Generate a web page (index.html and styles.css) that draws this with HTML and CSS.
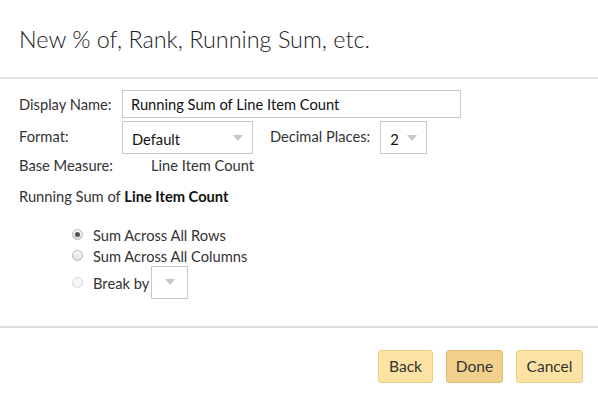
FILE: index.html
```html
<!DOCTYPE html>
<html>
<head>
<meta charset="utf-8">
<link rel="stylesheet" href="styles.css">
</head>
<body>
<div class="dialog">
  <div class="header"><h1 class="title">New % of, Rank, Running Sum, etc.</h1></div>
  <div class="body">
    <div class="row row-name">
      <span class="label">Display Name:</span>
      <div class="input">Running Sum of Line Item Count</div>
    </div>
    <div class="row row-format">
      <span class="label">Format:</span>
      <div class="select sel-format"><span>Default</span><span class="caret"></span></div>
      <span class="label label-dec">Decimal Places:</span>
      <div class="select sel-dec"><span>2</span><span class="caret"></span></div>
    </div>
    <div class="row row-base">
      <span class="label">Base Measure:</span>
      <span class="value">Line Item Count</span>
    </div>
    <div class="summary">Running Sum of <b>Line Item Count</b></div>
    <div class="options">
      <div class="opt"><span class="radio checked"></span><span>Sum Across All Rows</span></div>
      <div class="opt"><span class="radio"></span><span>Sum Across All Columns</span></div>
      <div class="opt opt-break"><span class="radio disabled"></span><span>Break by</span><div class="select sel-break"><span class="caret"></span></div></div>
    </div>
  </div>
  <div class="footer">
    <button class="btn btn-back">Back</button>
    <button class="btn btn-done">Done</button>
    <button class="btn btn-cancel">Cancel</button>
  </div>
</div>
</body>
</html>
```
FILE: styles.css
```css
* { box-sizing: border-box; }
html, body { margin: 0; padding: 0; background: #fff; }
body {
  font-family: "Lato", "Open Sans", sans-serif;
  color: #333;
  font-size: 14.7px;
  width: 598px;
  height: 402px;
  overflow: hidden;
}
.header {
  height: 79px;
  border-bottom: 2px solid #e2e2e2;
  padding: 22px 0 0 19px;
}
.title {
  margin: 0;
  font-weight: 300;
  font-size: 23.4px;
  line-height: 34px;
  color: #222;
}
.body {
  padding: 11px 19px 0 19px;
  height: 249px;
  border-bottom: 2px solid #dcdcdc;
}
.row { display: flex; align-items: center; }
.label { width: 103px; flex: none; }
.input {
  width: 339px;
  height: 28px;
  border: 1px solid #c9c9c9;
  padding: 0 8px;
  line-height: 26px;
  color: #111;
}
.row-format { margin-top: 3px; }
.row-format .label { margin-top: -3px; }
.select {
  height: 33px;
  border: 1px solid #c9c9c9;
  display: flex;
  align-items: center;
  justify-content: space-between;
  padding: 2px 9px 0 9px;
  color: #111;
}
.sel-format { width: 131px; }
.sel-dec { width: 47px; }
.label-dec { width: auto; margin: 0 10px 0 17px; }
.caret {
  width: 0; height: 0;
  border-left: 5px solid transparent;
  border-right: 5px solid transparent;
  border-top: 6px solid #c8c8c8;
  margin-top: -2px;
}
.row-base { margin-top: 2px; }
.row-base .label { width: 132px; }
.summary { margin-top: 13px; }
.summary b { font-weight: 700; color: #111; }
.options { padding-left: 53px; margin-top: 19px; display: flex; flex-direction: column; }
.opt { display: flex; align-items: center; height: 21px; }
.radio {
  width: 11px; height: 11px;
  border-radius: 50%;
  border: 1px solid #b5b5b5;
  background: linear-gradient(#fafafa, #e0e0e0);
  margin-right: 10px;
  flex: none;
  position: relative;
}
.radio.checked::after {
  content: "";
  position: absolute;
  left: 2px; top: 2px;
  width: 5px; height: 5px;
  border-radius: 50%;
  background: #555;
}
.radio.disabled { border-color: #dadada; background: #f6f6f6; }
.opt-break { height: 33px; margin-top: 0; }
.sel-break { width: 37px; justify-content: center; margin-left: 2px; padding: 0; }
.footer {
  display: flex;
  justify-content: flex-end;
  padding: 22px 15px 0 0;
  gap: 13px;
}
.btn {
  font-family: inherit;
  font-size: 15.5px;
  color: #333;
  background: #fde3a3;
  border: 1px solid #ebcd84;
  border-radius: 3px;
  height: 33px;
  padding: 0;
  line-height: 31px;
  text-align: center;
}
.btn-back { width: 55px; }
.btn-done { width: 57px; background: #f3d18d; border-color: #e0bc70; }
.btn-cancel { width: 67px; }
```
